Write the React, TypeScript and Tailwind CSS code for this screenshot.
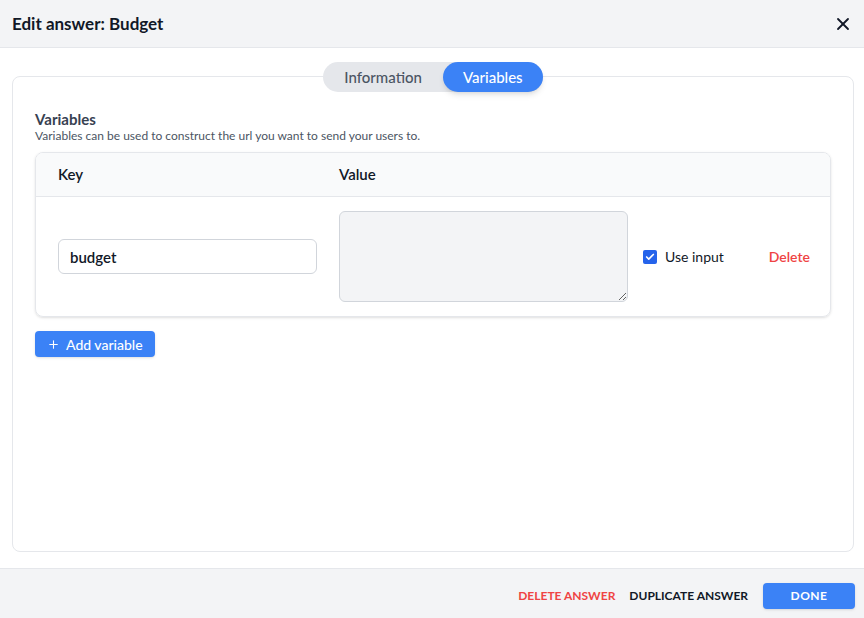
import { X, Plus, Check } from 'lucide-react';

const FONT = { fontFamily: 'Lato, "Noto Sans", sans-serif' };

function Tabs() {
  return (
    <div className="relative z-10 flex justify-center -mb-[16px]">
      <div className="flex h-[30px] rounded-full bg-[#e5e7eb]">
        <button className="px-[21px] text-[15px] font-medium text-[#4b5563] rounded-full">Information</button>
        <button className="px-[20px] text-[15px] font-medium text-white bg-[#3b82f6] rounded-full shadow-md">Variables</button>
      </div>
    </div>
  );
}

function VariableRow() {
  return (
    <div className="flex items-center px-[22px] py-[14px]">
      <div className="w-[259px] mr-[22px]">
        <input
          defaultValue="budget"
          className="w-full h-[35px] px-[11px] rounded-md border border-[#d1d5db] bg-white text-[15px] font-semibold text-[#111827] outline-none"
        />
      </div>
      <textarea className="w-[289px] h-[91px] rounded-md border border-[#d1d5db] bg-[#f3f4f6] outline-none" />
      <label className="flex items-center ml-[15px] gap-[8px] text-[14px] text-[#111827]">
        <span className="flex items-center justify-center w-[14px] h-[14px] rounded-[2px] bg-[#2563eb]">
          <Check className="w-[10px] h-[10px] text-white" strokeWidth={4} />
        </span>
        Use input
      </label>
      <button className="ml-auto mr-[-2px] text-[14px] font-semibold text-[#ef4444]">Delete</button>
    </div>
  );
}

export default function App() {
  return (
    <div className="flex flex-col h-screen bg-white" style={FONT}>
      {/* Header */}
      <div className="flex items-center justify-between h-[48px] pl-[12px] pr-[12px] bg-[#f3f4f6] border-b border-[#e5e7eb]">
        <h1 className="text-[17px] font-bold text-[#111827]">Edit answer: Budget</h1>
        <button className="text-[#111827] -mr-[1px]">
          <X className="w-[20px] h-[20px]" strokeWidth={2.2} />
        </button>
      </div>

      {/* Body */}
      <div className="flex-1 flex flex-col pl-[12px] pr-[10px] pt-[14px] pb-[16px]">
        <Tabs />
        <div className="flex-1 rounded-lg border border-[#e5e7eb] px-[22px] pt-[33px]">
          <h2 className="text-[15px] font-bold text-[#374151] leading-[18px]">Variables</h2>
          <p className="text-[12px] text-[#4b5563] leading-[16px]">
            Variables can be used to construct the url you want to send your users to.
          </p>
          <div className="mt-[8px] rounded-lg border border-[#e5e7eb] shadow-sm overflow-hidden">
            <div className="flex items-center h-[44px] px-[22px] bg-[#f9fafb] border-b border-[#e5e7eb] text-[15px] font-semibold text-[#111827]">
              <div className="w-[281px]">Key</div>
              <div>Value</div>
            </div>
            <VariableRow />
          </div>
          <button className="mt-[14px] flex items-center gap-[6px] h-[26px] px-[12px] rounded bg-[#3b82f6] text-white text-[14px] font-medium shadow-sm">
            <Plus className="w-[13px] h-[13px]" strokeWidth={2} />
            Add variable
          </button>
        </div>
      </div>

      {/* Footer */}
      <div className="flex items-center justify-end h-[50px] pr-[9px] pt-[4px] bg-[#f3f4f6] border-t border-[#e5e7eb]">
        <button className="text-[12px] font-bold text-[#ef4444] uppercase">Delete answer</button>
        <button className="ml-[14px] text-[12px] font-bold text-[#111827] uppercase">Duplicate answer</button>
        <button className="ml-[15px] w-[92px] h-[26px] rounded bg-[#3b82f6] text-[12px] font-bold tracking-[0.5px] text-white uppercase shadow-sm">
          Done
        </button>
      </div>
    </div>
  );
}
